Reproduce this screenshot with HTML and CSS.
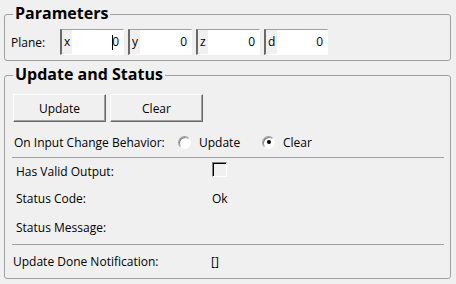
FILE: index.html
```html
<!DOCTYPE html>
<html lang="en">
<head>
  <meta charset="UTF-8" />
  <title>Plane Parameters</title>
  <link rel="stylesheet" href="styles.css">
</head>
<body>

  <fieldset class="group group-params">
    <legend>Parameters</legend>
    <div class="params-body">
      <span class="plane-label">Plane:</span>
      <div class="coords">
        <div class="coord"><span class="coord-name">x</span><span class="coord-value"><span class="caret"></span>0</span></div>
        <div class="coord"><span class="coord-name">y</span><span class="coord-value">0</span></div>
        <div class="coord"><span class="coord-name">z</span><span class="coord-value">0</span></div>
        <div class="coord"><span class="coord-name">d</span><span class="coord-value">0</span></div>
      </div>
    </div>
  </fieldset>

  <fieldset class="group group-status">
    <legend>Update and Status</legend>
    <div class="status-body">
      <div class="buttons">
        <button class="btn">Update</button>
        <button class="btn">Clear</button>
      </div>

      <div class="change-row">
        <span class="change-label">On Input Change Behavior:</span>
        <label class="radio"><span class="radio-dot"></span>Update</label>
        <label class="radio"><span class="radio-dot checked"><span class="dot"></span></span>Clear</label>
      </div>

      <div class="sep"></div>

      <div class="status-row row-valid">
        <span class="key">Has Valid Output:</span>
        <span class="value"><span class="check"></span></span>
      </div>
      <div class="status-row row-code">
        <span class="key">Status Code:</span>
        <span class="value">Ok</span>
      </div>
      <div class="status-row row-message">
        <span class="key">Status Message:</span>
        <span class="value"></span>
      </div>

      <div class="sep"></div>

      <div class="status-row row-notify">
        <span class="key">Update Done Notification:</span>
        <span class="value">[]</span>
      </div>
    </div>
  </fieldset>

</body>
</html>
```

FILE: styles.css
```css
body {
  margin: 0;
  background-color: #f0f0f0;
  font-family: 'Open Sans', sans-serif;
  font-size: 12px;
  color: #000;
}

.group {
  margin: 3px 5px 0 4px;
  padding: 0;
  border: 1px solid #a0a0a0;
  border-radius: 3px;
  min-width: 0;
}

.group legend {
  margin-left: 8px;
  padding: 0 2px 2px;
  font-size: 16px;
  font-weight: 700;
  line-height: 20px;
}

/* Parameters */
.params-body {
  display: flex;
  align-items: center;
  padding: 4px 0 5px 6px;
}

.plane-label {
  width: 49px;
}

.coords {
  display: flex;
  gap: 4px;
}

.coord {
  display: flex;
  width: 64px;
  height: 26px;
  box-sizing: border-box;
  border-style: solid;
  border-width: 1px 1px 1px 2px;
  border-color: #a0a0a0 #fff #fff #696969;
  line-height: 24px;
}

.coord-name {
  padding: 0 2px;
  background-color: #f0f0f0;
}

.coord-value {
  flex: 1;
  background-color: #fff;
  text-align: right;
  padding-right: 4px;
}

.caret {
  display: inline-block;
  width: 1px;
  height: 15px;
  margin-right: -1px;
  background-color: #000;
  vertical-align: middle;
}

/* Update and Status */
.status-body {
  padding: 8px 6px 0 8px;
}

.buttons {
  display: flex;
  gap: 4px;
}

.btn {
  width: 93px;
  height: 28px;
  box-sizing: border-box;
  padding: 0;
  font: inherit;
  color: #000;
  background-color: #f0f0f0;
  border: 1px solid;
  border-color: #fff #696969 #696969 #fff;
  box-shadow: inset -1px -1px #a0a0a0;
}

.change-row {
  display: flex;
  align-items: center;
  height: 20px;
  margin: 10px 0 5px;
  padding-left: 1px;
}

.change-label {
  width: 164px;
}

.radio {
  display: flex;
  align-items: center;
  gap: 8px;
  width: 84px;
}

.radio-dot {
  display: flex;
  align-items: center;
  justify-content: center;
  width: 13px;
  height: 13px;
  box-sizing: border-box;
  border-radius: 50%;
  border: 1px solid;
  border-color: #a0a0a0 #fff #fff #a0a0a0;
  background-color: #fff;
  box-shadow: inset 1px 1px #808080;
}

.dot {
  width: 4px;
  height: 4px;
  border-radius: 50%;
  background-color: #000;
}

.sep {
  border-top: 1px solid #a0a0a0;
  margin-left: -1px;
}

.status-row {
  display: flex;
  align-items: center;
}

.status-row .key {
  width: 196px;
  padding-left: 3px;
}

.row-valid { height: 27px; }
.row-code { height: 26px; }
.row-message { height: 33px; }

.row-notify {
  height: 33px;
}

.row-notify .key {
  width: 198px;
  padding-left: 0;
}

.check {
  display: block;
  width: 15px;
  height: 15px;
  margin-bottom: 4px;
  box-sizing: border-box;
  border: 1px solid;
  border-color: #808080 #fff #fff #808080;
  box-shadow: inset 1px 1px #000;
  background-color: #f0f0f0;
}
```
